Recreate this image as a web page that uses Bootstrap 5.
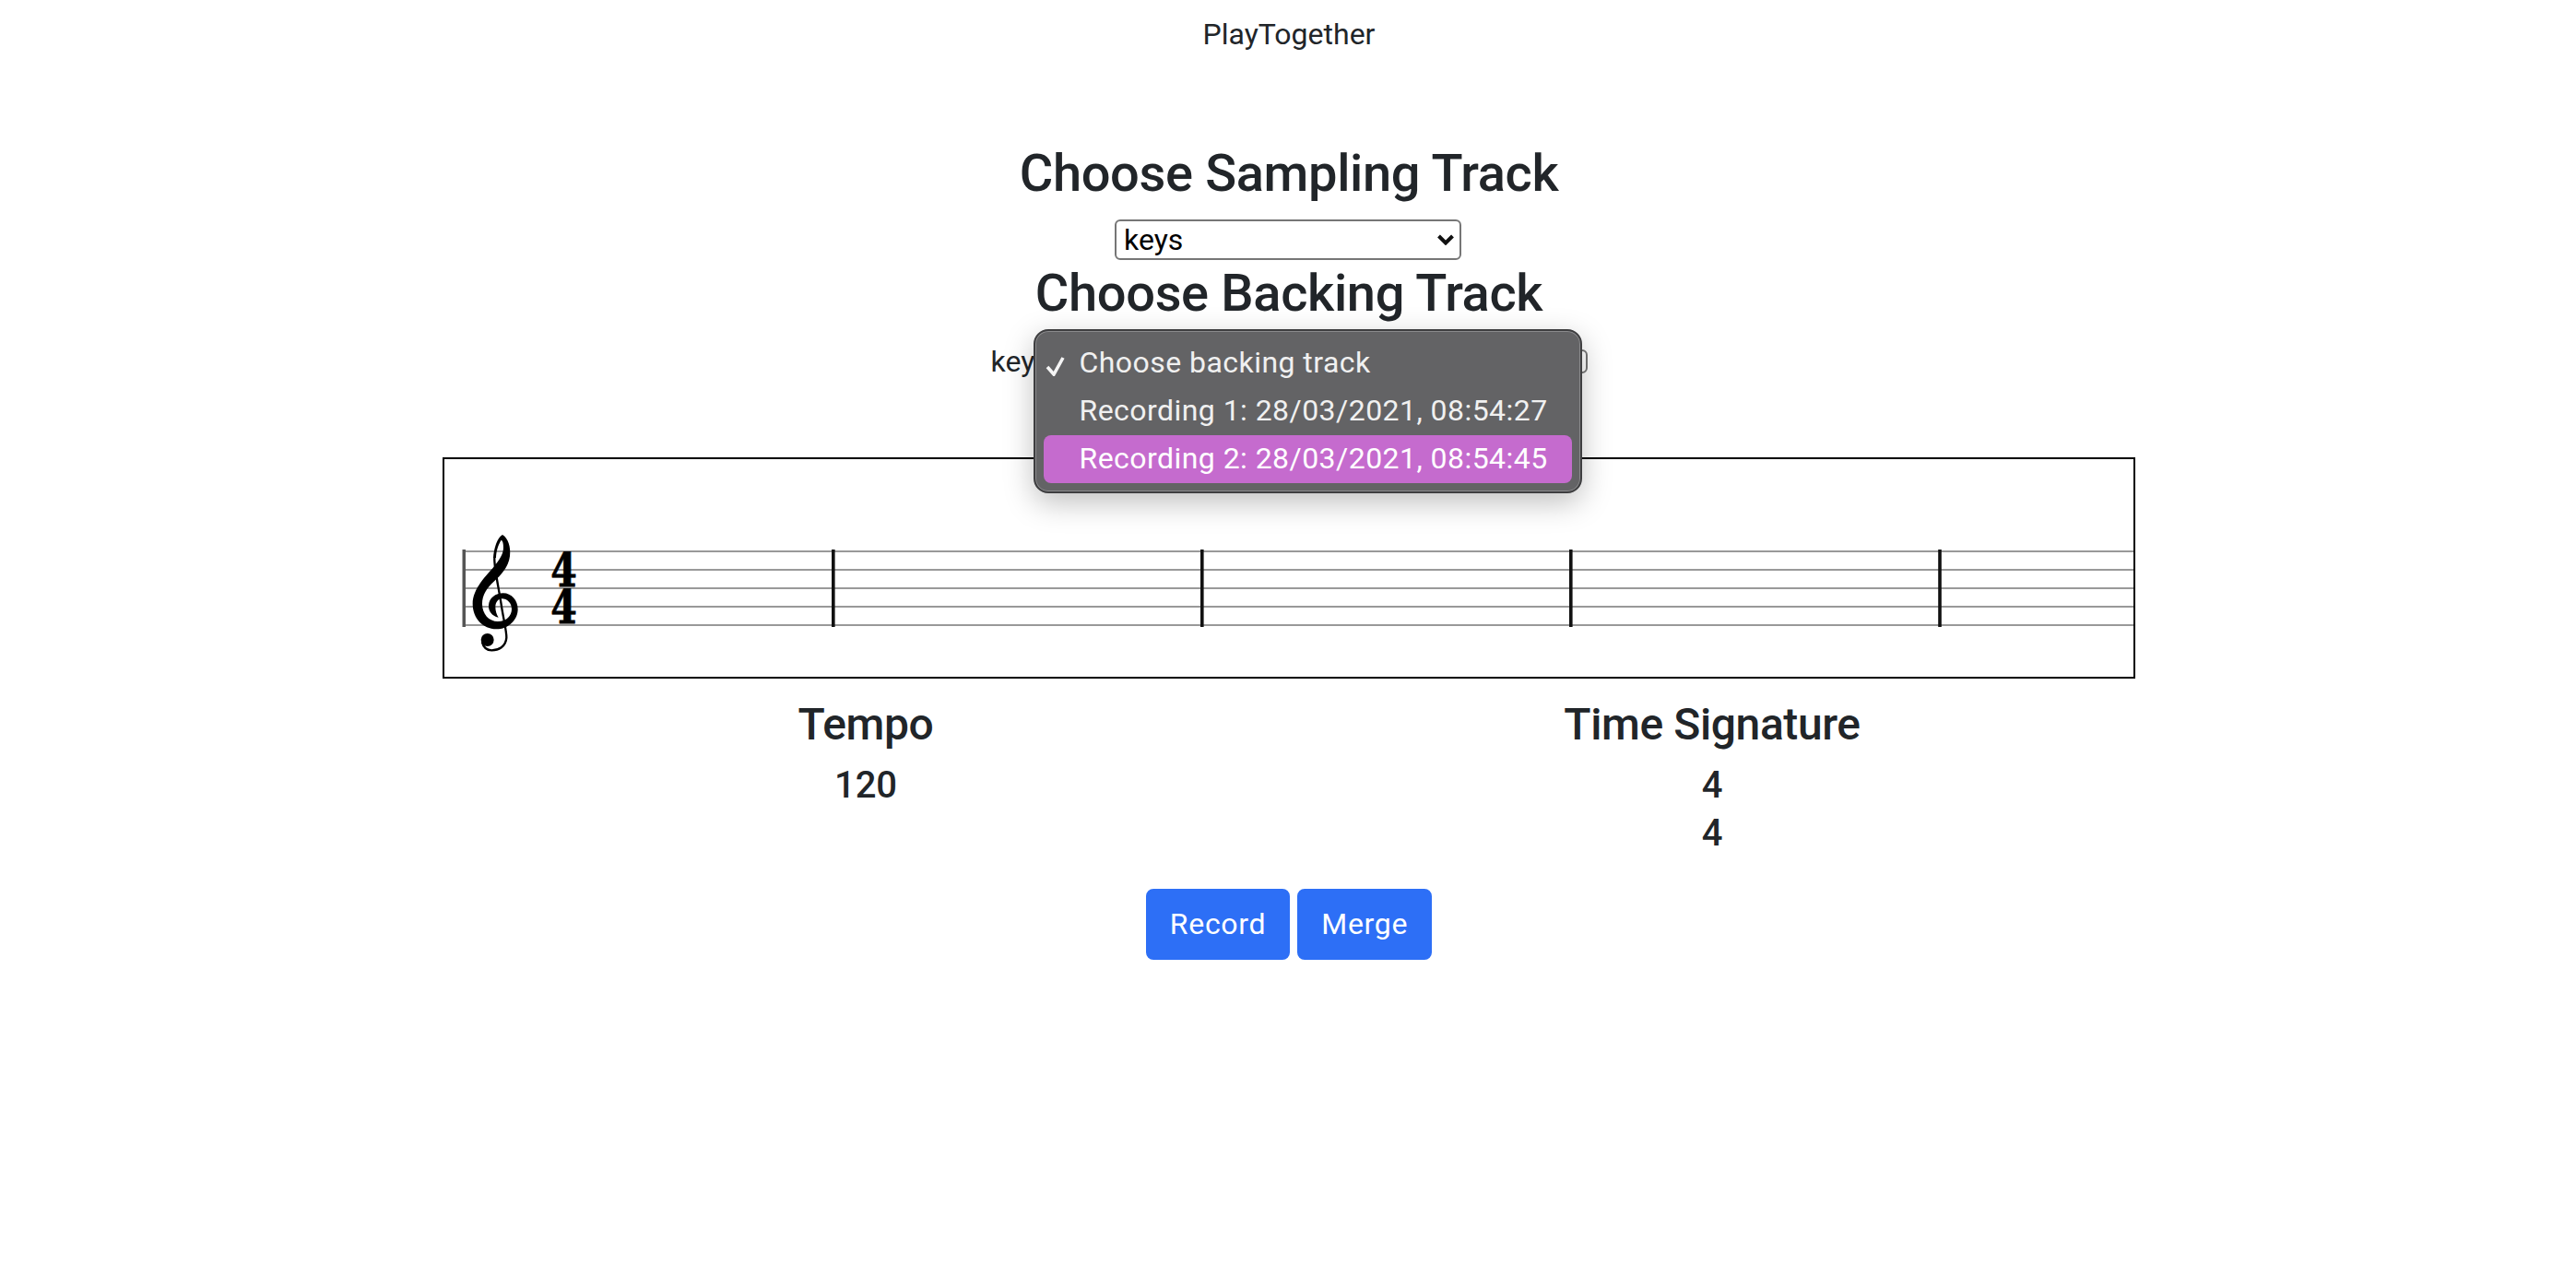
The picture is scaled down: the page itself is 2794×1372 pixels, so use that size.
<!DOCTYPE html>
<html lang="en">

<head>
    <meta charset="UTF-8">
    <meta name="viewport" content="width=device-width, initial-scale=1.0">
    <title>PlayTogether</title>
    <link href="https://cdn.jsdelivr.net/npm/bootstrap@5.3.0/dist/css/bootstrap.min.css" rel="stylesheet">
    <style>
        html {
            font-size: 32px;
        }

        body {
            font-family: Roboto, "Liberation Sans", sans-serif;
            color: #212529;
            padding-left: 2px;
            --bs-border-width: 2px;
        }

        .app-title {
            padding-top: 13px;
            height: 94px;
        }

        .pick-title {
            font-size: 56px;
            font-weight: 500;
            line-height: 67px;
            margin-top: 61px;
            margin-bottom: 16px;
            letter-spacing: -0.35px;
        }

        .pick-title.second {
            margin-top: 0;
        }

        .sample-line {
            height: 47px;
        }

        .sample-select {
            width: 376px;
            height: 44px;
            margin-right: 2px;
            padding: 0 0 0 8px;
            font-size: 32px;
            line-height: 40px;
            color: #000;
            border: 2px solid #767676;
            border-radius: 6px;
            background-image: url("data:image/svg+xml,%3csvg xmlns='http://www.w3.org/2000/svg' viewBox='0 0 18 12'%3e%3cpath fill='none' stroke='%23111' stroke-width='4' d='M1.5 2l7.5 7.5L16.5 2'/%3e%3c/svg%3e");
            background-position: right 6px center;
            background-size: 18px 12px;
            font-family: inherit;
        }

        .backing-line {
            width: 647px;
            height: 48px;
        }

        .backing-select {
            width: 40px;
            height: 26px;
            border: 2px solid #767676;
            border-radius: 6px;
        }

        .track-menu {
            position: absolute;
            left: 46px;
            top: -11px;
            width: 595px;
            height: 178px;
            padding: 9px 9px;
            background: #636365;
            border: 2px solid #3e3e40;
            border-radius: 16px;
            box-shadow: inset 0 0 0 1px #8a8a8c, 0 10px 32px rgba(0, 0, 0, .25);
            color: #f0f0f0;
            letter-spacing: .45px;
        }

        .track-item {
            height: 52px;
            padding-left: 39px;
            padding-bottom: 3px;
            border-radius: 8px;
            white-space: nowrap;
        }

        .track-item.active-item {
            background: #c56bce;
            color: #fff;
        }

        .track-check {
            position: absolute;
            left: 10px;
            top: 25px;
        }

        .score-box {
            width: 1836px;
            height: 240px;
            margin-top: 80px;
            border: 2px solid #000;
        }

        .score-box svg {
            display: block;
        }

        .info-row {
            width: 1836px;
            margin-top: 21px;
        }

        .info-title {
            font-size: 48px;
            font-weight: 500;
            line-height: 58px;
            margin-bottom: 11px;
            letter-spacing: -0.4px;
        }

        .info-value {
            font-size: 40px;
            font-weight: 500;
            line-height: 52px;
        }

        .action-row {
            margin-top: 34px;
        }

        .action-btn {
            background: #2d6ff6;
            border-color: #2d6ff6;
            padding: 12px 24px 13px;
            border-radius: 8px;
            letter-spacing: .7px;
        }
    </style>
</head>

<body>
    <div class="app-title text-center">PlayTogether</div>

    <h3 class="pick-title text-center">Choose Sampling Track</h3>
    <div class="sample-line d-flex justify-content-center">
        <select class="form-select sample-select">
            <option>keys</option>
        </select>
    </div>

    <h3 class="pick-title second text-center">Choose Backing Track</h3>
    <div class="backing-line position-relative d-flex align-items-center justify-content-between mx-auto">
        <span>keys</span>
        <span class="backing-select"></span>
        <div class="track-menu">
            <svg class="track-check" width="24" height="24" viewBox="0 0 24 24">
                <path d="M3 14l7 8L20 4" fill="none" stroke="#f5f5f5" stroke-width="3.6" />
            </svg>
            <div class="track-item d-flex align-items-center">Choose backing track</div>
            <div class="track-item d-flex align-items-center">Recording 1: 28/03/2021, 08:54:27</div>
            <div class="track-item active-item d-flex align-items-center">Recording 2: 28/03/2021, 08:54:45</div>
        </div>
    </div>

    <div class="score-box mx-auto">
        <svg width="1832" height="236" viewBox="482 498 1832 236">
            <g fill="#999">
                <rect x="502" y="597" width="1812" height="2" />
                <rect x="502" y="617" width="1812" height="2" />
                <rect x="502" y="637" width="1812" height="2" />
                <rect x="502" y="657" width="1812" height="2" />
                <rect x="502" y="677" width="1812" height="2" />
            </g>
            <rect x="501.5" y="596" width="3.5" height="84" fill="#555" />
            <g fill="#111">
                <rect x="902" y="596" width="3.6" height="84" />
                <rect x="1302" y="596" width="3.6" height="84" />
                <rect x="1702" y="596" width="3.6" height="84" />
                <rect x="2102.2" y="596" width="3.6" height="84" />
            </g>
            <!-- treble clef, traced at 3x -->
            <g transform="translate(495 570) scale(.3333)">
                <path d="M150 30C168 40 178 70 174 100C170 135 145 162 122 182C100 202 84 225 84 255C84 288 106 312 135 312C163 312 180 293 180 272C180 252 165 238 148 238C136 238 127 250 127 265C127 278 131 290 137 299C115 294 104 278 105 260C106 236 128 220 152 220C180 220 200 244 200 272C200 306 170 337 130 337C86 337 53 301 53 255C53 205 98 163 123 133C138 113 153 95 153 72C153 58 151 50 146 47C136 62 129 85 129 105L120 105C122 75 133 38 150 30Z" />
                <path d="M124 105C122 130 135 190 145 250C152 300 164 345 163 365C161 395 136 406 115 406C100 406 88 396 84 380" fill="none" stroke="#000" stroke-width="7" />
                <circle cx="101" cy="372" r="21" />
            </g>
            <text font-family="DejaVu Serif" font-weight="700" font-size="50" text-anchor="middle" stroke="#000" stroke-width=".8" transform="translate(611.5 0) scale(.82 1)"><tspan x="0" y="636">4</tspan><tspan x="0" y="676">4</tspan></text>
        </svg>
    </div>

    <div class="info-row row g-0 mx-auto text-center">
        <div class="col-6">
            <div class="info-title">Tempo</div>
            <div class="info-value">120</div>
        </div>
        <div class="col-6">
            <div class="info-title">Time Signature</div>
            <div class="info-value">4</div>
            <div class="info-value">4</div>
        </div>
    </div>

    <div class="action-row d-flex justify-content-center gap-1">
        <button class="btn btn-primary action-btn">Record</button>
        <button class="btn btn-primary action-btn">Merge</button>
    </div>

    <script src="https://cdn.jsdelivr.net/npm/bootstrap@5.3.0/dist/js/bootstrap.bundle.min.js"></script>
</body>

</html>
